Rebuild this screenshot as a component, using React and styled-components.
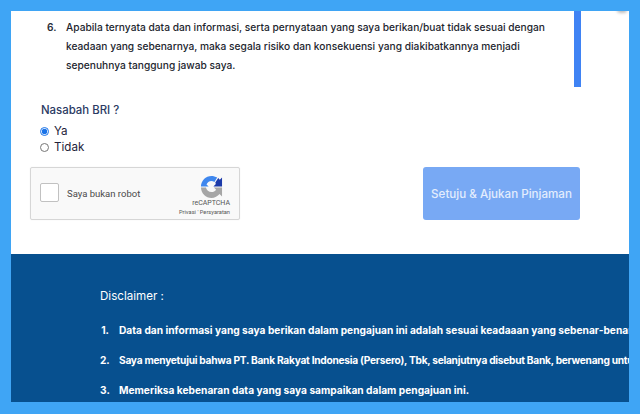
import styled, { createGlobalStyle } from 'styled-components';

const GlobalStyle = createGlobalStyle`
  html, body {
    margin: 0;
    padding: 0;
    background: #3fa5f5;
  }
  * {
    box-sizing: border-box;
  }
`;

const Frame = styled.div`
  width: 640px;
  height: 414px;
  padding: 11px 11px 12px;
  background: #3fa5f5;
  font-family: 'Inter', 'Liberation Sans', sans-serif;
  overflow: hidden;
`;

const Panel = styled.main`
  position: relative;
  height: 100%;
  background: #fff;
  overflow: hidden;
  display: flex;
  flex-direction: column;
`;

const ScrollThumb = styled.div`
  position: absolute;
  top: 0;
  left: 563px;
  width: 7px;
  height: 76px;
  background: #3f83f4;
`;

const CornerShade = styled.div`
  position: absolute;
  top: -3px;
  right: 2px;
  width: 10px;
  height: 5px;
  border-radius: 50%;
  background: #bbb;
  filter: blur(1.5px);
`;

const Terms = styled.ol`
  margin: 0;
  padding: 7px 0 0 36px;
  width: 546px;
  list-style: none;
`;

const TermRow = styled.li`
  display: flex;
`;

const Num = styled.span`
  flex: 0 0 19px;
  font-size: 10.2px;
  font-weight: 600;
  line-height: 19px;
  color: #2a2e3a;
`;

const TermText = styled.span`
  font-size: 10.2px;
  font-weight: 500;
  line-height: 19px;
  color: #22252e;
  letter-spacing: 0.01px;
`;

const Question = styled.fieldset`
  border: 0;
  margin: 0;
  padding: 26px 0 0 30px;
`;

const QuestionTitle = styled.div`
  font-size: 11.4px;
  font-weight: 500;
  line-height: 18px;
  color: #2b3a63;
  margin-bottom: 4px;
`;

const RadioRow = styled.label`
  display: flex;
  align-items: center;
  gap: 5px;
  height: 16px;
  margin-left: -1px;
  font-size: 11.6px;
  color: #22223a;
`;

const RadioInput = styled.input`
  width: 9px;
  height: 9px;
  margin: 0;
  accent-color: #1a73e8;
`;

const ActionRow = styled.div`
  display: flex;
  justify-content: space-between;
  padding: 12px 49px 0 19px;
`;

const Captcha = styled.div`
  width: 210px;
  height: 53px;
  display: flex;
  align-items: center;
  padding: 0 9px 0 9px;
  background: #f9f9f9;
  border: 1px solid #d6d6d6;
  border-radius: 2px;
  box-shadow: 0 0 2px rgba(0, 0, 0, 0.06);
`;

const CaptchaBox = styled.div`
  width: 19px;
  height: 19px;
  margin-bottom: 2px;
  background: #fff;
  border: 1px solid #c1c1c1;
  border-radius: 2px;
`;

const CaptchaLabel = styled.span`
  margin: 0 0 1px 8px;
  font-family: 'Roboto', 'Liberation Sans', sans-serif;
  font-size: 9.5px;
  color: #4a4a4a;
  flex: 1;
`;

const CaptchaBrand = styled.div`
  display: flex;
  flex-direction: column;
  align-items: flex-end;
  font-family: 'Roboto', 'Liberation Sans', sans-serif;
  color: #555;
  padding-top: 4px;
`;

const LogoSlot = styled.div`
  display: flex;
  margin-right: 7px;
`;

const BrandName = styled.span`
  font-size: 7px;
  line-height: 9px;
  margin-top: 1px;
`;

const BrandLinks = styled.span`
  font-size: 5.7px;
  line-height: 8px;
  white-space: nowrap;
`;

const SubmitButton = styled.button`
  width: 157px;
  height: 53px;
  border: 0;
  padding: 0;
  border-radius: 3px;
  background: #78a9f4;
  color: #e3edfd;
  font-family: inherit;
  font-size: 11.6px;
  font-weight: 500;
`;

const Disclaimer = styled.section`
  flex: 1;
  margin-top: 34px;
  padding: 33px 0 0 89px;
  background: #07508f;
  color: #fff;
  overflow: hidden;
`;

const DisclaimerTitle = styled.div`
  font-size: 11.6px;
  line-height: 18px;
  margin-bottom: 10px;
`;

const DisclaimerRow = styled.div`
  display: flex;
  height: 30px;
  align-items: center;
  white-space: nowrap;
  font-size: 10.2px;
  font-weight: 700;
  letter-spacing: ${(p) => p.$spacing || 0}px;
`;

const DisclaimerNum = styled.span`
  flex: 0 0 9px;
  min-width: 0;
  margin-right: 10px;
  text-align: right;
`;

const RecaptchaLogo = () => (
  <svg width="23" height="23" viewBox="0 0 24 24">
    <path fill="#a6a6a6" d="M1 13h5.200c.5 2.700 2.900 4.800 5.800 4.800 2 0 3.700-1 4.800-2.500L14.500 13H23v9.500l-2.600-2.600C18.400 22.400 15.400 24 12 24 6 24 1.300 19.200 1 13z" />
    <path fill="#3f87ee" d="M1 12C1 6 6 1 12 1c2 0 4 .5 6 1.700L15 7.200c-1-.6-2-.9-3-.9-2.500 0-4.500 1.700-5.200 3.700L9 12H1z" />
    <path fill="#1c3aa9" d="M16 7.800L19 3.200L20.700 5L23 2.500V12H14L16.500 9.500C16.300 8.900 16.200 8.300 16 7.800z" />
  </svg>
);

const terms = 'Apabila ternyata data dan informasi, serta pernyataan yang saya berikan/buat tidak sesuai dengan keadaan yang sebenarnya, maka segala risiko dan konsekuensi yang diakibatkannya menjadi sepenuhnya tanggung jawab saya.';

const disclaimers = [
  { text: 'Data dan informasi yang saya berikan dalam pengajuan ini adalah sesuai keadaaan yang sebenar-benarnya.', spacing: 0 },
  { text: 'Saya menyetujui bahwa PT. Bank Rakyat Indonesia (Persero), Tbk, selanjutnya disebut Bank, berwenang untuk', spacing: -0.27 },
  { text: 'Memeriksa kebenaran data yang saya sampaikan dalam pengajuan ini.', spacing: 0 },
];

export default function App() {
  return (
    <Frame>
      <GlobalStyle />
      <Panel>
        <ScrollThumb />
        <CornerShade />
        <Terms>
          <TermRow>
            <Num>6.</Num>
            <TermText>{terms}</TermText>
          </TermRow>
        </Terms>
        <Question>
          <QuestionTitle>Nasabah BRI ?</QuestionTitle>
          <RadioRow>
            <RadioInput type="radio" name="nasabah" defaultChecked />
            Ya
          </RadioRow>
          <RadioRow>
            <RadioInput type="radio" name="nasabah" />
            Tidak
          </RadioRow>
        </Question>
        <ActionRow>
          <Captcha>
            <CaptchaBox />
            <CaptchaLabel>Saya bukan robot</CaptchaLabel>
            <CaptchaBrand>
              <LogoSlot>
                <RecaptchaLogo />
              </LogoSlot>
              <BrandName>reCAPTCHA</BrandName>
              <BrandLinks>Privasi ' Persyaratan</BrandLinks>
            </CaptchaBrand>
          </Captcha>
          <SubmitButton>Setuju &amp; Ajukan Pinjaman</SubmitButton>
        </ActionRow>
        <Disclaimer>
          <DisclaimerTitle>Disclaimer :</DisclaimerTitle>
          {disclaimers.map((item, i) => (
            <DisclaimerRow key={i} $spacing={item.spacing}>
              <DisclaimerNum>{i + 1}.</DisclaimerNum>
              {item.text}
            </DisclaimerRow>
          ))}
        </Disclaimer>
      </Panel>
    </Frame>
  );
}
